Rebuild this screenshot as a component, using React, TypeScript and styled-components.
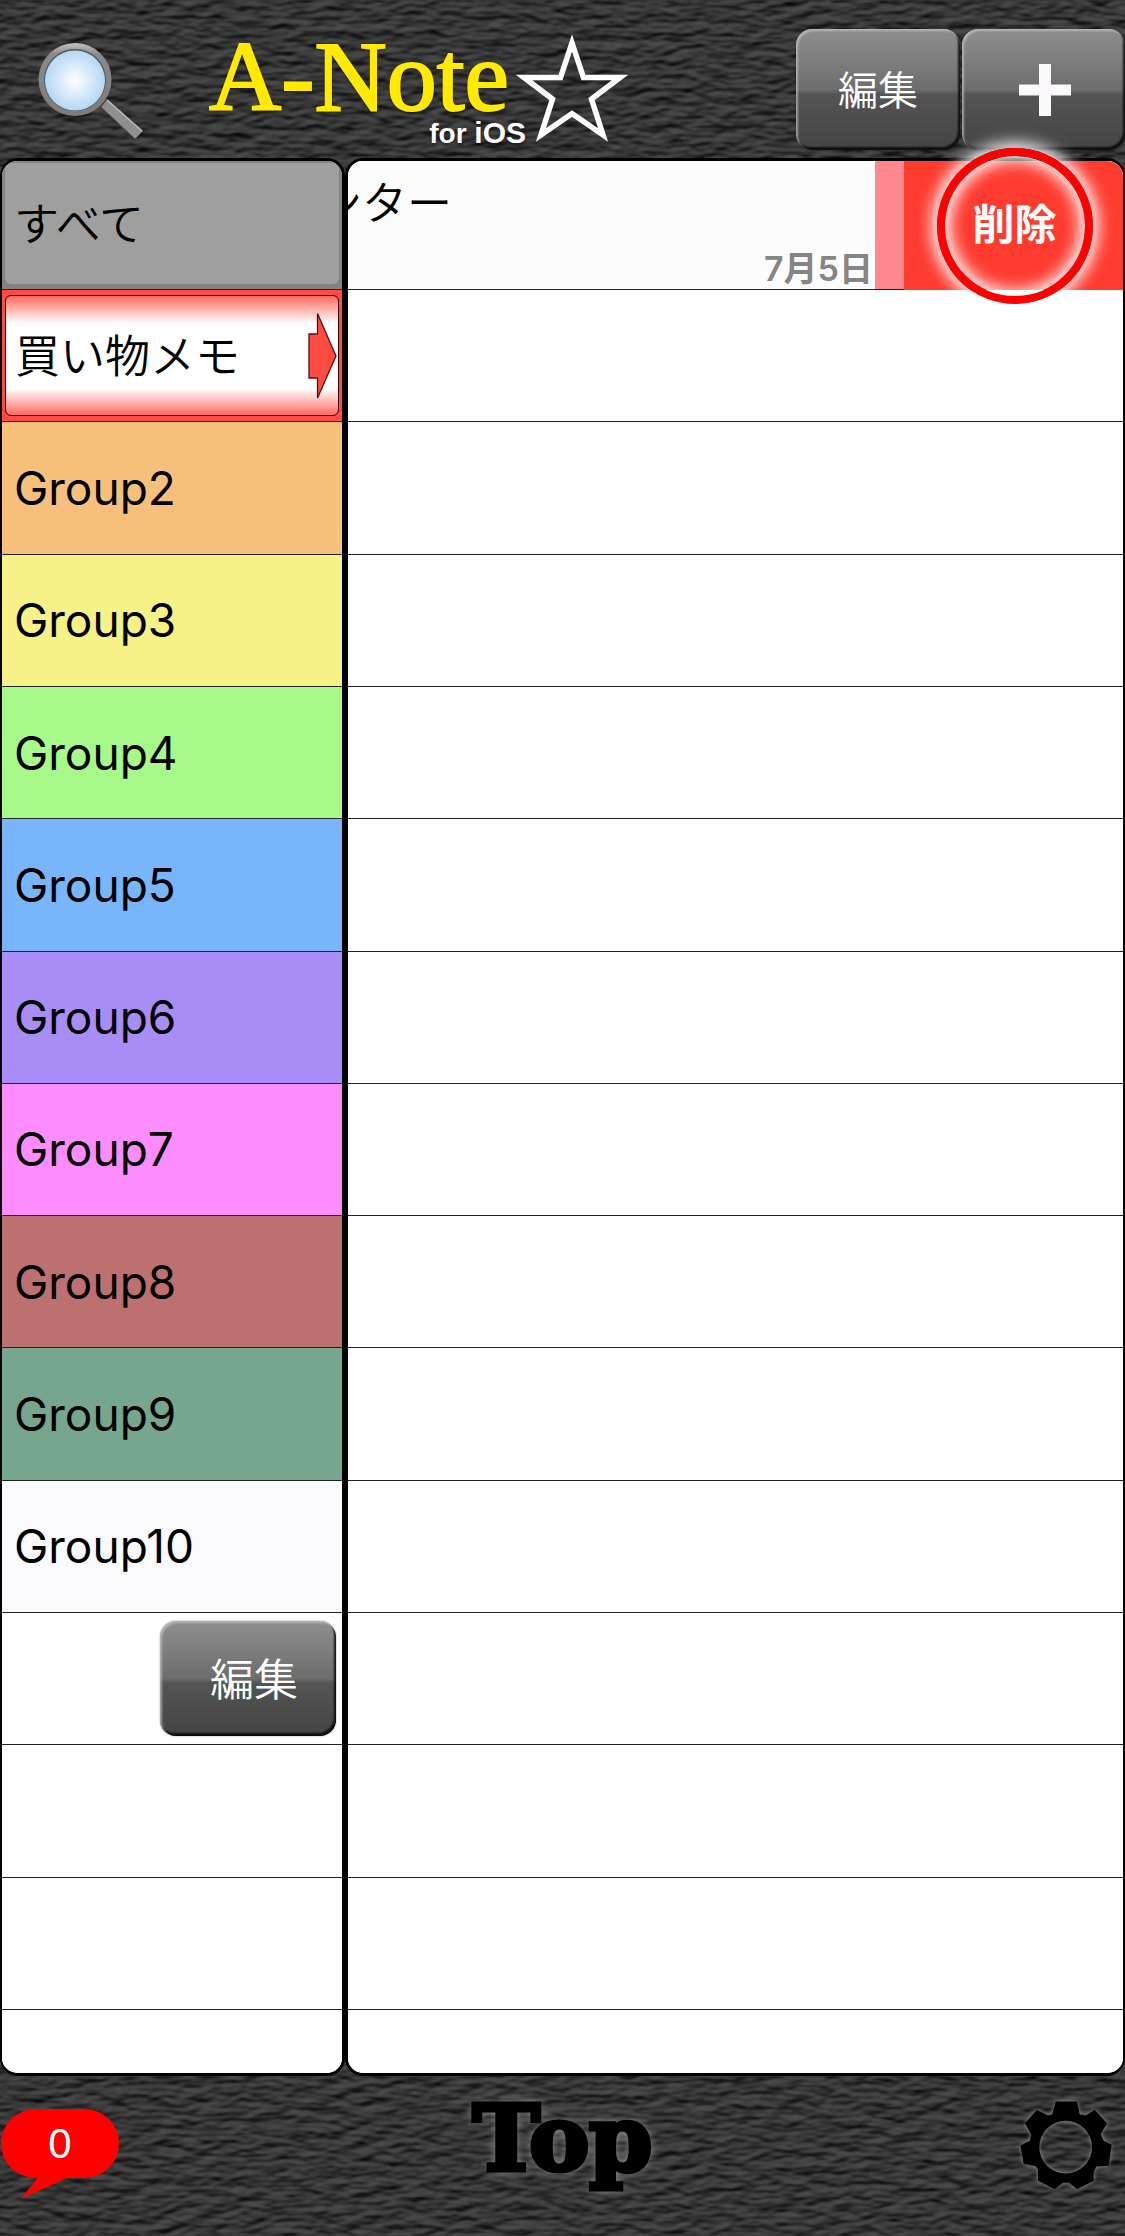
import React, { useState } from 'react';
import styled, { createGlobalStyle } from 'styled-components';

const SANS = `Inter, "Noto Sans CJK JP", sans-serif`;
const JP = `"Noto Sans CJK JP", sans-serif`;

const GlobalStyle = createGlobalStyle`
  * { box-sizing: border-box; }
  body { margin: 0; background: #343434; font-family: ${SANS}; color: #000; }
  button { border: 0; padding: 0; margin: 0; background: none; font: inherit; color: inherit; cursor: pointer; }
  ul { list-style: none; margin: 0; padding: 0; }
  h1, p { margin: 0; }
  svg { display: block; }
`;

const Page = styled.div`
  position: relative;
  isolation: isolate;
  min-height: 100vh;
  display: flex;
  flex-direction: column;
  overflow: hidden;
`;

const Leather = styled.svg`
  position: absolute;
  inset: 0;
  width: 100%;
  height: 100%;
  z-index: -1;
`;

const Header = styled.header`
  height: 158px;
  display: flex;
  align-items: flex-start;
  padding: 29px 0 0 36px;
`;

const SearchButton = styled.button`
  margin-top: 12px;
`;

const Logo = styled.div`
  display: flex;
  margin-left: 64px;
`;

const LogoText = styled.h1`
  width: 317px;
  padding-top: 8px;
  font-weight: 400;
`;

const LogoName = styled.span`
  display: block;
  font-family: "Liberation Serif", serif;
  font-size: 100px;
  line-height: 80px;
  color: #ffea00;
  -webkit-text-stroke: 2px #ffea00;
  text-shadow: 0 2px 3px #0008;
`;

const LogoSub = styled.span`
  display: block;
  text-align: right;
  font: bold 28px/32px "Liberation Sans", sans-serif;
  color: #fff;
  text-shadow: 0 2px 3px #0008;
`;

const LogoOs = styled.span`
  font-size: 30px;
`;

const LogoStar = styled.svg`
  margin: 4px 0 0 -10px;
`;

const HeaderActions = styled.div`
  display: flex;
  gap: 2px;
  margin-left: auto;
`;

const GlossButton = styled.button<{ $w: number; $h: number; $size: number; $shift?: number }>`
  display: flex;
  align-items: center;
  justify-content: center;
  width: ${p => p.$w}px;
  height: ${p => p.$h}px;
  padding: 0 0 0 ${p => p.$shift ?? 0}px;
  border-radius: 16px;
  background: linear-gradient(#8f8f8f, #6d6d6d 50%, #545454 54%, #444 100%);
  box-shadow: inset 2px 2px 2px #c8c8c8aa, inset -2px -3px 2px #000c, 0 0 2px #0006;
  color: #fff;
  font-family: ${JP};
  font-weight: 350;
  font-size: ${p => p.$size}px;
  line-height: 48px;
`;

const ButtonLabel = styled.span`
  padding-bottom: 4px;
`;

const Panels = styled.main`
  flex: 1;
  display: grid;
  grid-template-columns: 345px 1fr;
`;

const PanelFrame = styled.section`
  position: relative;
  display: grid;
`;

const Rows = styled.ul<{ $side?: boolean }>`
  display: grid;
  grid-template-rows: 129px repeat(13, minmax(96px, 1fr)) 63px;
  overflow: hidden;
  background: #fff;
  border: 3px solid #000;
  border-left-width: ${p => (p.$side ? 2 : 3)}px;
  border-right-width: ${p => (p.$side ? 3 : 2)}px;
  border-radius: 18px;
`;

const Row = styled.li<{ $color?: string }>`
  display: flex;
  min-width: 0;
  background: ${p => p.$color ?? '#fff'};
  border-bottom: 1px solid #222;
  &:last-child { border-bottom: 0; }
`;

const GroupButton = styled.button`
  flex: 1;
  padding: 0 0 0 12px;
  text-align: left;
  font-size: 46px;
  line-height: 60px;
`;

const AllButton = styled(GroupButton)`
  margin: 2px 3px 5px;
  padding: 0 0 4px 9px;
  border-radius: 6px;
  background: #9f9f9f;
  font-family: ${JP};
  font-weight: 350;
  font-size: 45px;
`;

const SelectedButton = styled(AllButton)`
  display: flex;
  align-items: center;
  justify-content: space-between;
  margin: 5px 3px 5px;
  padding: 0 1px 0 9px;
  border: 1px solid #300;
  background: linear-gradient(#ff6a60, #fff 23%, #fff 78%, #ff6a60);
`;

const EditCell = styled.div`
  flex: 1;
  display: flex;
  justify-content: flex-end;
  align-items: center;
  padding-right: 6px;
`;

const Note = styled.div`
  flex: 1;
  display: flex;
  flex-direction: column;
  justify-content: space-between;
  min-width: 0;
  background: #fcfcfc;
`;

const NoteTitle = styled.p`
  display: flex;
  justify-content: flex-end;
  width: 104px;
  padding-top: 10px;
  overflow: hidden;
  font-family: ${JP};
  font-weight: 350;
  font-size: 45px;
  line-height: 60px;
  white-space: nowrap;
`;

const NoteDate = styled.p`
  padding-right: 2px;
  text-align: right;
  font-size: 34px;
  font-weight: 600;
  line-height: 40px;
  color: #858585;
`;

const ColorTag = styled.div`
  width: 29px;
  background: #ff888f;
`;

const DeleteButton = styled.button`
  width: 219px;
  margin-bottom: -1px;
  padding: 0 0 8px 2px;
  background: #ff3b30;
  color: #fff;
  font-family: ${JP};
  font-weight: 700;
  font-size: 42px;
`;

const FocusRing = styled.span`
  position: absolute;
  top: -10px;
  right: 32px;
  width: 156px;
  height: 156px;
  border: 8px solid #f00;
  border-radius: 50%;
  box-shadow: 0 0 16px 5px #fff, inset 0 0 16px 5px #fff;
  pointer-events: none;
`;

const Footer = styled.footer`
  display: grid;
  grid-template-columns: 1fr auto 1fr;
  align-items: start;
  height: 160px;
  padding-top: 24px;
`;

const Bubble = styled.button`
  position: relative;
  width: 118px;
  height: 69px;
  margin: 9px 0 0 1px;
  border-radius: 35px;
  background: #f00;
  color: #fff;
  font: 42px/69px "Liberation Sans", sans-serif;
  &::after {
    content: "";
    position: absolute;
    left: 20px;
    top: 68px;
    width: 48px;
    height: 22px;
    background: #f00;
    clip-path: polygon(36% 0, 100% 0, 0 100%);
  }
`;

const TopButton = styled.button`
  font-family: "DejaVu Serif", serif;
  font-weight: 700;
  font-size: 90px;
  line-height: 76px;
  color: #000;
  -webkit-text-stroke: 5px #000;
  text-shadow: 0 0 12px #bbb;
`;

const SettingsButton = styled.button`
  justify-self: end;
  margin-right: 12px;
  svg { filter: drop-shadow(0 0 2px #999); }
`;

const GROUPS = [
  { name: 'Group2', color: '#f6c07c' },
  { name: 'Group3', color: '#f6f287' },
  { name: 'Group4', color: '#a7f98a' },
  { name: 'Group5', color: '#79b5fa' },
  { name: 'Group6', color: '#a98df7' },
  { name: 'Group7', color: '#fd8dfe' },
  { name: 'Group8', color: '#bc7070' },
  { name: 'Group9', color: '#76a68d' },
  { name: 'Group10', color: '#fbfbfe' },
];

const EMPTY_NOTES = Array.from({ length: 14 }, (_, i) => i);

function LeatherTexture() {
  return (
    <Leather aria-hidden="true">
      <filter id="leather" x="0" y="0" width="100%" height="100%" colorInterpolationFilters="sRGB">
        <feTurbulence type="fractalNoise" baseFrequency="0.045 0.11" numOctaves="2" seed="8" />
        <feDiffuseLighting surfaceScale="3" diffuseConstant="0.3" lightingColor="#fff">
          <feDistantLight azimuth="75" elevation="45" />
        </feDiffuseLighting>
      </filter>
      <rect width="100%" height="100%" filter="url(#leather)" />
    </Leather>
  );
}

function SearchIcon() {
  return (
    <svg width="109" height="100" viewBox="36 41 109 100">
      <defs>
        <radialGradient id="glass">
          <stop offset="0" stopColor="#fff" />
          <stop offset="1" stopColor="#b5d7f6" />
        </radialGradient>
        <linearGradient id="rim" x1="0" y1="0" x2="0" y2="1">
          <stop offset="0" stopColor="#c4c4c4" />
          <stop offset="0.15" stopColor="#8a8a8a" />
          <stop offset="1" stopColor="#7c7c7c" />
        </linearGradient>
      </defs>
      <path d="M101 107L107 99L143 131L135 139Z" fill="#8e8f91" stroke="#4a4a4a" strokeWidth="1" />
      <path d="M107 100L142 131" stroke="#bbb" strokeWidth="1.5" />
      <circle cx="75" cy="79.500" r="36.500" fill="url(#rim)" />
      <circle cx="75" cy="80" r="31" fill="#555" />
      <circle cx="75" cy="80.500" r="30" fill="url(#glass)" />
    </svg>
  );
}

export default function App() {
  const [selected, setSelected] = useState('買い物メモ');
  return (
    <>
      <GlobalStyle />
      <Page>
        <LeatherTexture />
        <Header>
          <SearchButton type="button" aria-label="検索"><SearchIcon /></SearchButton>
          <Logo>
            <LogoText>
              <LogoName>A-Note</LogoName>
              <LogoSub>for <LogoOs>iOS</LogoOs></LogoSub>
            </LogoText>
            <LogoStar width="112" height="110" viewBox="516 33 112 110" aria-hidden="true">
              <path
                d="M572 43L583.500 77.500H620L591.500 99L603 135L572 113.500L541 135L552.500 99L524 77.500H560.500Z"
                fill="none" stroke="#fff" strokeWidth="5.500" strokeMiterlimit="10"
              />
            </LogoStar>
          </Logo>
          <HeaderActions>
            <GlossButton type="button" $w={164} $h={121} $size={40}><ButtonLabel>編集</ButtonLabel></GlossButton>
            <GlossButton type="button" $w={163} $h={121} $size={40} $shift={2} aria-label="追加">
              <svg width="52" height="52" viewBox="0 0 52 52">
                <path d="M20 0H32V20.500H52V31.500H32V52H20V31.500H0V20.500H20Z" fill="#fbf9fb" />
              </svg>
            </GlossButton>
          </HeaderActions>
        </Header>

        <Panels>
          <PanelFrame>
            <Rows $side>
              <Row $color="#838383">
                <AllButton type="button" onClick={() => setSelected('すべて')}>すべて</AllButton>
              </Row>
              <Row $color="#ff4b42">
                <SelectedButton type="button" aria-pressed={selected === '買い物メモ'} onClick={() => setSelected('買い物メモ')}>
                  <ButtonLabel>買い物メモ</ButtonLabel>
                  <svg width="29" height="88" viewBox="0 0 29 88" aria-hidden="true">
                    <path d="M1 22H9.500V1.500L28 44L9.500 86V66H1Z" fill="#ff4b42" stroke="#501010" strokeWidth="1.300" />
                  </svg>
                </SelectedButton>
              </Row>
              {GROUPS.map(g => (
                <Row key={g.name} $color={g.color}>
                  <GroupButton type="button" onClick={() => setSelected(g.name)}>{g.name}</GroupButton>
                </Row>
              ))}
              <Row>
                <EditCell>
                  <GlossButton type="button" $w={176} $h={115} $size={44} $shift={12}><ButtonLabel>編集</ButtonLabel></GlossButton>
                </EditCell>
              </Row>
              <Row />
              <Row />
              <Row />
            </Rows>
          </PanelFrame>

          <PanelFrame>
            <Rows>
              <Row>
                <Note>
                  <NoteTitle>ンター</NoteTitle>
                  <NoteDate>7月5日</NoteDate>
                </Note>
                <ColorTag />
                <DeleteButton type="button">削除</DeleteButton>
              </Row>
              {EMPTY_NOTES.map(i => <Row key={i} />)}
            </Rows>
            <FocusRing />
          </PanelFrame>
        </Panels>

        <Footer>
          <Bubble type="button">0</Bubble>
          <TopButton type="button">Top</TopButton>
          <SettingsButton type="button" aria-label="設定">
            <svg width="94" height="91" viewBox="118 176 282 272">
              <path
                fillRule="evenodd"
                d="M228 180H292L300 218L318 222L345 205L382 245L363 278L372 298L396 310L387 373L350 375L342 392V418L293 443L268 424H250L225 443L175 418V385L168 374L132 367L122 312L150 298L155 280L136 245L172 205L205 222L218 218ZM258 238A79 79 0 1 0 258 396A79 79 0 1 0 258 238Z"
              />
            </svg>
          </SettingsButton>
        </Footer>
      </Page>
    </>
  );
}
